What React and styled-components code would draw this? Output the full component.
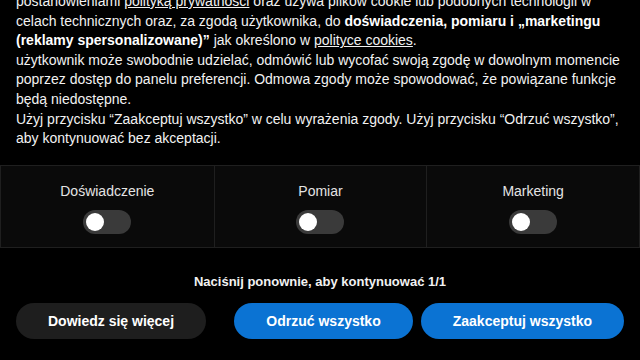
import React from "react";
import styled, { createGlobalStyle } from "styled-components";

const Global = createGlobalStyle`
  html, body { margin: 0; padding: 0; background: #000; }
  body { font-family: "Liberation Sans", Arial, sans-serif; overflow: hidden; }
  * { box-sizing: border-box; }
`;

const Page = styled.div`
  width: 640px;
  height: 360px;
  overflow: hidden;
  background: #000;
  display: flex;
  flex-direction: column;
`;

const Description = styled.p`
  margin: -8px 0 0;
  padding: 0 16px;
  font-size: 14px;
  line-height: 19.6px;
  color: #f2f2f2;
  b { font-weight: 700; color: #fff; }
  a { color: #f2f2f2; text-decoration: underline; }
`;

const Categories = styled.div`
  margin-top: 16px;
  display: grid;
  grid-template-columns: 1fr 1fr 1fr;
  border: 1px solid #1f1f1f;
  background: #0a0a0a;
`;

const Category = styled.div`
  display: flex;
  flex-direction: column;
  align-items: center;
  padding: 16px 0 13px;
  gap: 10px;
  border-left: ${(p) => (p.$first ? "none" : "1px solid #1f1f1f")};
`;

const Label = styled.span`
  font-size: 14px;
  line-height: 18px;
  color: #e4e4e4;
`;

const Track = styled.span`
  position: relative;
  display: block;
  width: 48px;
  height: 24px;
  border-radius: 12px;
  background: #3a3a3a;
`;

const Knob = styled.span`
  position: absolute;
  left: 3px;
  top: 3px;
  width: 18px;
  height: 18px;
  border-radius: 50%;
  background: #fff;
`;

const Hint = styled.div`
  margin-top: 25px;
  text-align: center;
  font-size: 13px;
  font-weight: 700;
  line-height: 17px;
  color: #f2f2f2;
`;

const Actions = styled.div`
  margin-top: 13px;
  padding: 0 16px;
  display: flex;
  justify-content: space-between;
`;

const Group = styled.div`
  display: flex;
  gap: 8px;
`;

const Button = styled.button`
  height: 36px;
  padding: 0 32px;
  border: none;
  border-radius: 18px;
  font-family: "Liberation Sans", Arial, sans-serif;
  font-size: 14px;
  font-weight: 700;
  color: #fff;
  background: ${(p) => (p.$primary ? "#0b73d3" : "#1e1e1e")};
  cursor: pointer;
`;

const categories = ["Doświadczenie", "Pomiar", "Marketing"];

export default function App() {
  return (
    <Page>
      <Global />
      <Description>
        postanowieniami <a href="#">polityką prywatności</a> oraz używa plików cookie lub podobnych technologii w
        celach technicznych oraz, za zgodą użytkownika, do{" "}
        <b>doświadczenia, pomiaru i „marketingu (reklamy spersonalizowane)”</b> jak określono w{" "}
        <a href="#">polityce cookies</a>.
        <br />
        użytkownik może swobodnie udzielać, odmówić lub wycofać swoją zgodę w dowolnym momencie poprzez dostęp
        do panelu preferencji. Odmowa zgody może spowodować, że powiązane funkcje będą niedostępne.
        <br />
        Użyj przycisku “Zaakceptuj wszystko” w celu wyrażenia zgody. Użyj przycisku “Odrzuć wszystko”, aby
        kontynuować bez akceptacji.
      </Description>
      <Categories>
        {categories.map((c, i) => (
          <Category key={c} $first={i === 0}>
            <Label>{c}</Label>
            <Track>
              <Knob />
            </Track>
          </Category>
        ))}
      </Categories>
      <Hint>Naciśnij ponownie, aby kontynuować 1/1</Hint>
      <Actions>
        <Button>Dowiedz się więcej</Button>
        <Group>
          <Button $primary>Odrzuć wszystko</Button>
          <Button $primary>Zaakceptuj wszystko</Button>
        </Group>
      </Actions>
    </Page>
  );
}
